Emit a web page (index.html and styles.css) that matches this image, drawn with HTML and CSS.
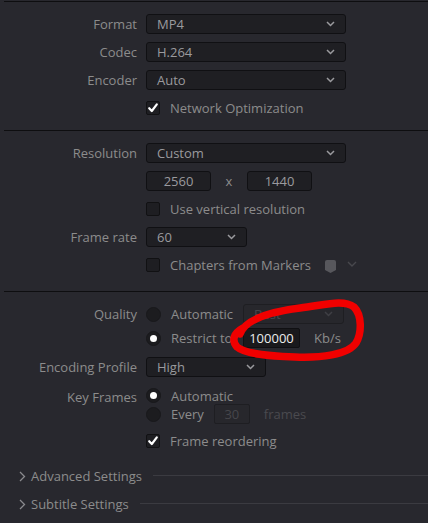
FILE: index.html
```html
<!DOCTYPE html>
<html>
<head>
<meta charset="utf-8">
<link rel="stylesheet" href="styles.css">
</head>
<body>
<div class="panel">
  <section class="sec sec1">
    <div class="row"><span class="lbl">Format</span>
      <div class="select w200"><span>MP4</span><svg class="chev" width="9" height="6" viewBox="0 0 9 6"><path d="M1 1 L4.5 4.5 L8 1" /></svg></div></div>
    <div class="row"><span class="lbl">Codec</span>
      <div class="select w200"><span>H.264</span><svg class="chev" width="9" height="6" viewBox="0 0 9 6"><path d="M1 1 L4.5 4.5 L8 1" /></svg></div></div>
    <div class="row"><span class="lbl">Encoder</span>
      <div class="select w200"><span>Auto</span><svg class="chev" width="9" height="6" viewBox="0 0 9 6"><path d="M1 1 L4.5 4.5 L8 1" /></svg></div></div>
    <div class="row"><span class="lbl"></span>
      <div class="check-line"><span class="cb on"><svg width="14" height="14" viewBox="0 0 14 14"><path d="M3.2 7.2 L5.8 10 L10.8 3.4" /></svg></span><span class="ctext">Network Optimization</span></div></div>
  </section>

  <section class="sec sec2">
    <div class="row"><span class="lbl">Resolution</span>
      <div class="select w200"><span>Custom</span><svg class="chev" width="9" height="6" viewBox="0 0 9 6"><path d="M1 1 L4.5 4.5 L8 1" /></svg></div></div>
    <div class="row"><span class="lbl"></span>
      <div class="dims"><span class="num">2560</span><span class="times">x</span><span class="num">1440</span></div></div>
    <div class="row"><span class="lbl"></span>
      <div class="check-line"><span class="cb"></span><span class="ctext">Use vertical resolution</span></div></div>
    <div class="row"><span class="lbl">Frame rate</span>
      <div class="select w101"><span>60</span><svg class="chev" width="9" height="6" viewBox="0 0 9 6"><path d="M1 1 L4.5 4.5 L8 1" /></svg></div></div>
    <div class="row"><span class="lbl"></span>
      <div class="check-line"><span class="cb"></span><span class="ctext">Chapters from Markers</span>
        <svg class="marker" width="11" height="13" viewBox="0 0 11 13"><path d="M0 2 Q0 0 2 0 L9 0 Q11 0 11 2 L11 10 L5.5 13 L0 10 Z" /></svg>
        <svg class="mchev" width="10" height="7" viewBox="0 0 10 7"><path d="M1 1 L5 5 L9 1" /></svg>
      </div></div>
  </section>

  <section class="sec sec3">
    <div class="row quality"><span class="lbl">Quality</span>
      <div class="opts">
        <div class="opt"><span class="radio"></span><span class="otext qw">Automatic</span>
          <div class="select disabled w101"><span>Best</span><svg class="chev" width="9" height="6" viewBox="0 0 9 6"><path d="M1 1 L4.5 4.5 L8 1" /></svg></div></div>
        <div class="opt"><span class="radio on"></span><span class="otext qw">Restrict to</span>
          <span class="field active">100000</span><span class="unit">Kb/s</span></div>
      </div></div>
    <div class="row enc"><span class="lbl">Encoding Profile</span>
      <div class="select w119"><span>High</span><svg class="chev" width="9" height="6" viewBox="0 0 9 6"><path d="M1 1 L4.5 4.5 L8 1" /></svg></div></div>
    <div class="row keys"><span class="lbl">Key Frames</span>
      <div class="opts">
        <div class="opt short"><span class="radio on"></span><span class="otext">Automatic</span></div>
        <div class="opt"><span class="radio"></span><span class="otext">Every</span>
          <span class="field dim">30</span><span class="unit dimtext">frames</span></div>
      </div></div>
    <div class="row reorder"><span class="lbl"></span>
      <div class="check-line"><span class="cb on"><svg width="14" height="14" viewBox="0 0 14 14"><path d="M3.2 7.2 L5.8 10 L10.8 3.4" /></svg></span><span class="ctext">Frame reordering</span></div></div>

    <div class="group first"><svg class="gchev" width="7" height="11" viewBox="0 0 7 11"><path d="M1 1 L5.5 5.5 L1 10" /></svg><span class="gtitle">Advanced Settings</span><span class="gline"></span></div>
    <div class="group"><svg class="gchev" width="7" height="11" viewBox="0 0 7 11"><path d="M1 1 L5.5 5.5 L1 10" /></svg><span class="gtitle">Subtitle Settings</span><span class="gline"></span></div>
  </section>
</div>

<svg class="scribble" width="428" height="523" viewBox="0 0 428 523">
  <path d="M240 334 C 245 320, 268 312, 300 308 C 325 305, 343 299, 354 307 C 362 315, 362 333, 356 343 C 348 355, 320 358, 295 357 C 270 356, 245 354, 237 347 C 231 340, 234 333, 243 328" />
</svg>
</body>
</html>
```

FILE: styles.css
```css
html, body {
  margin: 0;
  padding: 0;
  background: #28282e;
}

body {
  width: 428px;
  height: 523px;
  overflow: hidden;
  position: relative;
  font-family: "Open Sans", "Noto Sans", sans-serif;
  font-size: 13px;
  color: #8c8c8c;
  padding-top: 1px;
  box-sizing: border-box;
}

.panel {
  margin-left: 4px;
}

.sec {
  border-top: 1px solid #0e0e10;
  display: flex;
  flex-direction: column;
  gap: 8px;
  padding-top: 12px;
}

.sec1 { padding-bottom: 12px; }
.sec2 { padding-bottom: 16px; }
.sec3 { gap: 0; }

.row {
  display: grid;
  grid-template-columns: 133px auto;
  column-gap: 9px;
  align-items: start;
  min-height: 20px;
  line-height: 20px;
}

.lbl {
  text-align: right;
  color: #8c8c8c;
  white-space: nowrap;
}

.select {
  box-sizing: border-box;
  height: 20px;
  border: 1px solid #101013;
  border-radius: 3px;
  background: #1f1f23;
  display: flex;
  align-items: center;
  justify-content: space-between;
  padding: 0 10px 0 10px;
  color: #9a9a9e;
  line-height: 18px;
}

.w200 { width: 200px; }
.w101 { width: 101px; }
.w119 { width: 120px; }

.chev path {
  fill: none;
  stroke: #9a9a9e;
  stroke-width: 1.5;
}

.select.disabled {
  background: #27272c;
  border-color: #1e1e22;
  color: #47474c;
}

.select.disabled .chev path { stroke: #3f3f44; }

.check-line {
  display: flex;
  align-items: center;
  height: 20px;
}

.cb {
  box-sizing: border-box;
  width: 14px;
  height: 14px;
  border: 1px solid #111113;
  border-radius: 2px;
  background: #1e1e22;
  display: block;
  position: relative;
}

.cb svg {
  position: absolute;
  left: -1px;
  top: -1px;
}

.cb path {
  fill: none;
  stroke: #ffffff;
  stroke-width: 2.2;
  stroke-linecap: round;
  stroke-linejoin: round;
}

.ctext {
  margin-left: 10px;
  color: #8c8c8c;
  white-space: nowrap;
}

.marker {
  margin-left: 14px;
  margin-top: 2px;
}
.marker path { fill: #57575c; }

.mchev {
  margin-left: 11px;
  margin-top: -2px;
}
.mchev path {
  fill: none;
  stroke: #48484d;
  stroke-width: 1.4;
}

.dims {
  display: flex;
  align-items: center;
  height: 20px;
}

.num {
  box-sizing: border-box;
  width: 65px;
  height: 20px;
  border: 1px solid #101013;
  border-radius: 3px;
  background: #1f1f23;
  color: #9a9a9e;
  text-align: center;
  line-height: 18px;
}

.times {
  width: 36px;
  text-align: center;
  color: #8c8c8c;
}

/* radio groups */
.quality { margin-bottom: 9px; }
.enc { margin-bottom: 10px; }
.keys { margin-bottom: 7px; }

.opts {
  display: flex;
  flex-direction: column;
  gap: 4px;
}

.keys .opts { gap: 0; }

.opt {
  display: flex;
  align-items: center;
  height: 20px;
}

.opt.short {
  height: 17px;
}

.radio {
  box-sizing: border-box;
  width: 15px;
  height: 15px;
  border-radius: 50%;
  background: #1c1c1f;
  border: 1px solid #18181b;
  display: flex;
  align-items: center;
  justify-content: center;
  flex: none;
}

.radio.on::after {
  content: "";
  width: 7px;
  height: 7px;
  border-radius: 50%;
  background: #ffffff;
}

.otext {
  margin-left: 10px;
  color: #8c8c8c;
  white-space: nowrap;
  margin-right: 10px;
}

.otext.qw {
  width: 62px;
  margin-right: 10px;
}

.field {
  box-sizing: border-box;
  height: 20px;
  border: 1px solid #101013;
  border-radius: 2px;
  line-height: 18px;
  text-align: center;
}

.field.active {
  width: 57px;
  background: #19191c;
  color: #ececec;
}

.field.dim {
  width: 36px;
  background: #27272c;
  border-color: #1e1e22;
  color: #46464b;
}

.unit {
  margin-left: 14px;
  color: #8c8c8c;
}

.unit.dimtext { color: #4a4a4f; }

/* collapsible groups */
.group {
  display: flex;
  align-items: center;
  height: 20px;
  padding-left: 15px;
  margin-top: 8px;
}

.group.first { margin-top: 15px; }

.gchev path {
  fill: none;
  stroke: #8a8a8e;
  stroke-width: 1.3;
}

.gtitle {
  margin-left: 5px;
  color: #8c8c8c;
  white-space: nowrap;
}

.gline {
  flex: 1;
  height: 1px;
  background: #3b3b41;
  margin-left: 11px;
  margin-top: -1px;
}

.scribble {
  position: absolute;
  left: 0;
  top: 0;
  pointer-events: none;
}

.scribble path {
  fill: none;
  stroke: #f00000;
  stroke-width: 7.5;
  stroke-linecap: round;
  stroke-linejoin: round;
}
```
